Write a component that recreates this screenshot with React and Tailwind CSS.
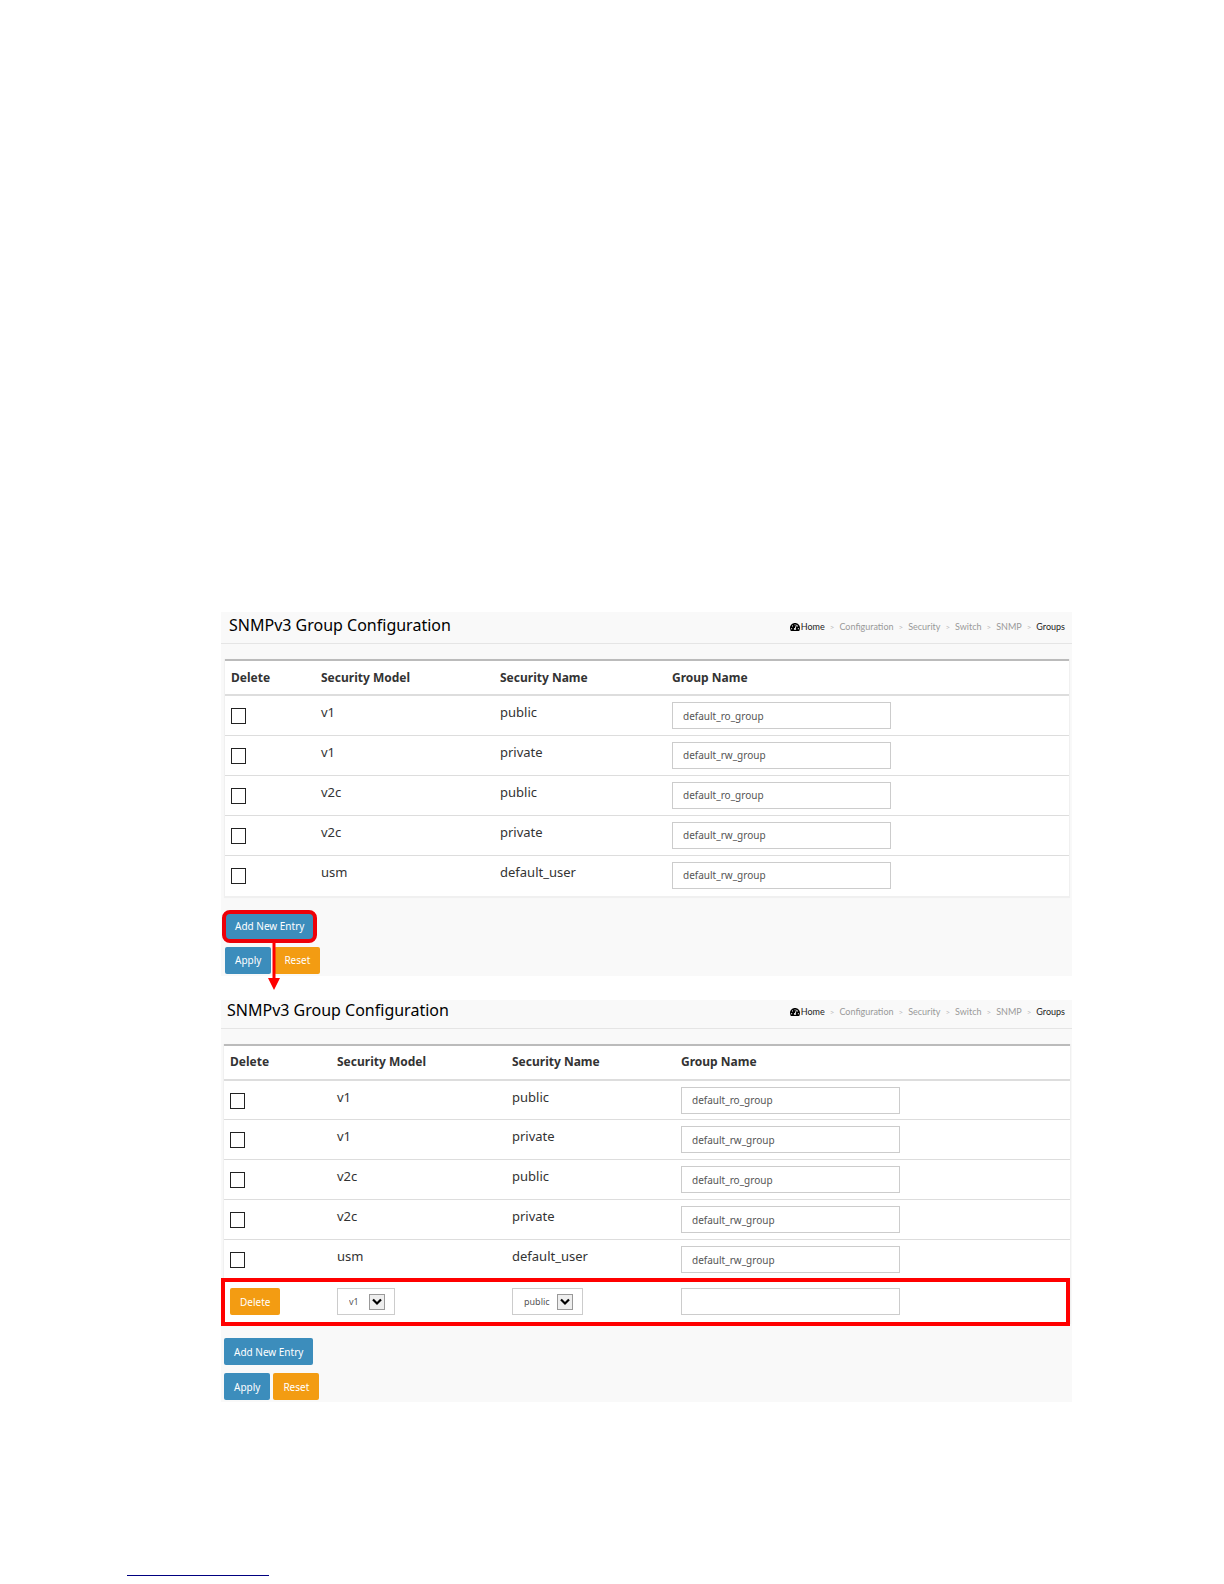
import React, { useState } from "react";
import { FaTachometerAlt } from "react-icons/fa";

const initialGroups = [
  { id: 1, model: "v1", name: "public", group: "default_ro_group" },
  { id: 2, model: "v1", name: "private", group: "default_rw_group" },
  { id: 3, model: "v2c", name: "public", group: "default_ro_group" },
  { id: 4, model: "v2c", name: "private", group: "default_rw_group" },
  { id: 5, model: "usm", name: "default_user", group: "default_rw_group" },
];

const crumbs = ["Configuration", "Security", "Switch", "SNMP"];

const Breadcrumb = () => (
  <nav
    aria-label="Breadcrumb"
    className="flex items-center gap-[5px] font-['Lato',sans-serif] text-[9px] leading-4 text-[#999]"
  >
    <a href="#home" className="flex items-center gap-px text-[#222]">
      <FaTachometerAlt className="size-[10px] text-black" />
      Home
    </a>
    {crumbs.map((crumb) => (
      <React.Fragment key={crumb}>
        <span className="text-[8px] text-[#bbb]">&gt;</span>
        <a href={`#${crumb.toLowerCase()}`}>{crumb}</a>
      </React.Fragment>
    ))}
    <span className="text-[8px] text-[#bbb]">&gt;</span>
    <span className="text-[#222]">Groups</span>
  </nav>
);

const Button = ({ color = "blue", children, ...props }) => (
  <button
    type="button"
    className={`h-[27px] rounded-xs px-[10px] text-[10px] leading-4 text-white ${
      color === "blue" ? "bg-[#3c8dbc]" : "bg-[#f39c12]"
    }`}
    {...props}
  >
    {children}
  </button>
);

const SelectBox = ({ label, options, className }) => (
  <div className={`relative h-[27px] ${className}`}>
    <select
      aria-label={label}
      className="size-full appearance-none border border-[#ccc] bg-white pl-[11px] text-[9px] text-[#555]"
    >
      {options.map((option) => (
        <option key={option}>{option}</option>
      ))}
    </select>
    <svg
      viewBox="0 0 16 16"
      className="pointer-events-none absolute top-[6px] right-[10px] size-4"
    >
      <rect x="0.5" y="0.5" width="15" height="15" fill="#eee" stroke="#999" />
      <path d="M4 5.5l4 4 4-4" fill="none" stroke="#000" strokeWidth="2.2" />
    </svg>
  </div>
);

const inputStyle =
  "block h-[27px] w-[219px] border border-[#ccc] bg-white px-[10px] text-[10px] text-[#555]";

const GroupTable = ({ columns, children }) => {
  const [groups, setGroups] = useState(initialGroups);

  const updateGroup = (id, value) =>
    setGroups(groups.map((g) => (g.id === id ? { ...g, group: value } : g)));

  return (
    <table className="w-full table-fixed border-t-2 border-[#bbb] bg-white text-left shadow-[0_1px_1px_1px_#f0f0f0]">
      <colgroup>
        {columns.map((width) => (
          <col key={width} className={width} />
        ))}
        <col />
      </colgroup>
      <thead>
        <tr className="h-[35px] border-b-2 border-[#ddd] text-xs leading-4 text-[#333]">
          <th className="pl-[6px]">Delete</th>
          <th>Security Model</th>
          <th>Security Name</th>
          <th>Group Name</th>
        </tr>
      </thead>
      <tbody className="text-[13px] leading-5 text-[#333]">
        {groups.map((g) => (
          <tr
            key={g.id}
            className="h-10 border-t border-[#ddd] align-top last:h-[41px]"
          >
            <td className="pt-3 pl-[6px]">
              <input
                type="checkbox"
                aria-label={`Delete ${g.model} ${g.name}`}
                className="block h-4 w-[15px] appearance-none border border-[#222] bg-white checked:bg-[#3c8dbc]"
              />
            </td>
            <td className="pt-[6px]">{g.model}</td>
            <td className="pt-[6px]">{g.name}</td>
            <td className="pt-[6px]">
              <input
                type="text"
                aria-label={`Group name for ${g.model} ${g.name}`}
                value={g.group}
                onChange={(e) => updateGroup(g.id, e.target.value)}
                className={inputStyle}
              />
            </td>
          </tr>
        ))}
        {children}
      </tbody>
    </table>
  );
};

const NewEntryRow = () => (
  <tr className="relative h-[42px] border-t border-[#ddd] align-top">
    <td className="pt-2 pl-[6px]">
      <Button color="orange">Delete</Button>
      <span className="pointer-events-none absolute -top-[3px] right-0 -bottom-1 -left-[3px] border-4 border-[#f00]" />
    </td>
    <td className="pt-2">
      <SelectBox
        label="Security model"
        options={["v1", "v2c", "usm"]}
        className="w-[58px]"
      />
    </td>
    <td className="pt-2">
      <SelectBox
        label="Security name"
        options={["public", "private", "default_user"]}
        className="w-[71px]"
      />
    </td>
    <td className="pt-2">
      <input type="text" aria-label="New group name" className={inputStyle} />
    </td>
  </tr>
);

const PanelHeader = ({ className }) => (
  <header
    className={`flex items-center justify-between border-b border-[#e5e5e5] pr-[7px] ${className}`}
  >
    <h1 className="pb-1 text-base leading-6 text-black">
      SNMPv3 Group Configuration
    </h1>
    <Breadcrumb />
  </header>
);

const App = () => {
  return (
    <div className="bg-white pt-[612px] font-['Noto_Sans',sans-serif]">
      <main className="mr-[152px] ml-[221px] flex flex-col gap-6">
        <section className="bg-[#f9f9f9] pb-[2px]">
          <PanelHeader className="h-8 pb-[2px] pl-2" />
          <div className="mt-[15px] mr-[3px] ml-1">
            <GroupTable
              columns={["w-[96px]", "w-[179px]", "w-[172px]"]}
            />
            <div className="relative mt-4 w-fit">
              <Button>Add New Entry</Button>
              <span className="pointer-events-none absolute -inset-x-[3px] -top-[2px] -bottom-[3px] rounded-lg border-4 border-[#ee0008]" />
              <svg
                viewBox="0 0 12 48"
                className="pointer-events-none absolute top-[30px] left-[43px] h-12 w-3"
              >
                <path d="M4.5 0h3v36H12L6 48 0 36h4.5z" fill="#f00" />
              </svg>
            </div>
            <div className="mt-[7px] flex gap-[3px]">
              <Button>Apply</Button>
              <Button color="orange">Reset</Button>
            </div>
          </div>
        </section>

        <section className="bg-[#f9f9f9] pb-[2px]">
          <PanelHeader className="h-[29px] pb-[3px] pl-[6px]" />
          <div className="mt-[15px] mr-[2px] ml-[3px]">
            <GroupTable columns={["w-[113px]", "w-[175px]", "w-[169px]"]}>
              <NewEntryRow />
            </GroupTable>
            <div className="mt-4">
              <Button>Add New Entry</Button>
            </div>
            <div className="mt-2 flex gap-[3px]">
              <Button>Apply</Button>
              <Button color="orange">Reset</Button>
            </div>
          </div>
        </section>
      </main>
      <footer className="pt-[173px] pb-2 pl-[127px]">
        <hr className="w-[142px] border-[#000080]" />
      </footer>
    </div>
  );
};

export default App;
